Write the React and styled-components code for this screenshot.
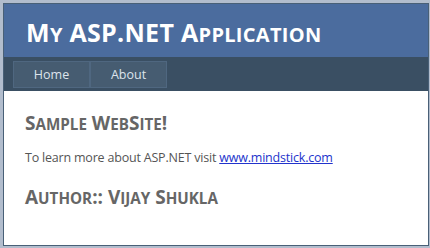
import React from "react";
import styled, { createGlobalStyle } from "styled-components";

const GlobalStyle = createGlobalStyle`
  html, body {
    margin: 0;
    padding: 0;
    background: #fff;
  }
  * {
    box-sizing: border-box;
  }
`;

const Frame = styled.div`
  width: 430px;
  height: 248px;
  background: #b2bdcd;
  padding: 3px 1px 2px 3px;
  display: flex;
`;

const Page = styled.div`
  flex: 1;
  display: flex;
  flex-direction: column;
  background: #fff;
  border: 1px solid #496077;
  font-family: "Open Sans", "Noto Sans", sans-serif;
`;

const Header = styled.div`
  background: #4b6c9e;
  height: 53px;
  display: flex;
  align-items: center;
  padding-left: 22px;
  padding-top: 3px;
`;

// lowercase drawn as smaller capitals, a bit larger than the browser's synthetic small-caps
const Sc = styled.span`
  font-size: 0.8em;
  text-transform: uppercase;
`;

const Title = styled.h1`
  margin: 0;
  color: #fff;
  font-size: 25px;
  font-weight: 700;
  letter-spacing: 0.3px;
`;

const MenuBar = styled.div`
  background: #3a4f63;
  height: 34px;
  display: flex;
  align-items: center;
  padding-left: 9px;
`;

const MenuItem = styled.a`
  display: flex;
  align-items: center;
  justify-content: center;
  width: ${(p) => p.w}px;
  height: 27px;
  background: #465c71;
  border: 1px solid #4f6780;
  color: #dde4ec;
  font-size: 12.5px;
  text-decoration: none;
`;

const Main = styled.div`
  flex: 1;
  padding: 19px 21px;
  color: #666;
`;

const Heading = styled.h2`
  margin: 0;
  font-size: 19px;
  font-weight: 700;
  color: #666;
  letter-spacing: 0px;
`;

const Text = styled.p`
  margin: 13px 0 18px;
  font-size: 12.5px;
  color: #555;
  letter-spacing: -0.2px;
`;

const Link = styled.a`
  color: #2233cc;
  text-decoration: underline;
`;

export default function App() {
  return (
    <>
      <GlobalStyle />
      <Frame>
        <Page>
          <Header>
            <Title>
              M<Sc>y</Sc> ASP.NET A<Sc>pplication</Sc>
            </Title>
          </Header>
          <MenuBar>
            <MenuItem w={77} href="#">Home</MenuItem>
            <MenuItem w={77} href="#">About</MenuItem>
          </MenuBar>
          <Main>
            <Heading>
              S<Sc>ample</Sc> W<Sc>eb</Sc>S<Sc>ite</Sc>!
            </Heading>
            <Text>
              To learn more about ASP.NET visit{" "}
              <Link href="#">www.mindstick.com</Link>
            </Text>
            <Heading>
              A<Sc>uthor</Sc>:: V<Sc>ijay</Sc> S<Sc>hukla</Sc>
            </Heading>
          </Main>
        </Page>
      </Frame>
    </>
  );
}
